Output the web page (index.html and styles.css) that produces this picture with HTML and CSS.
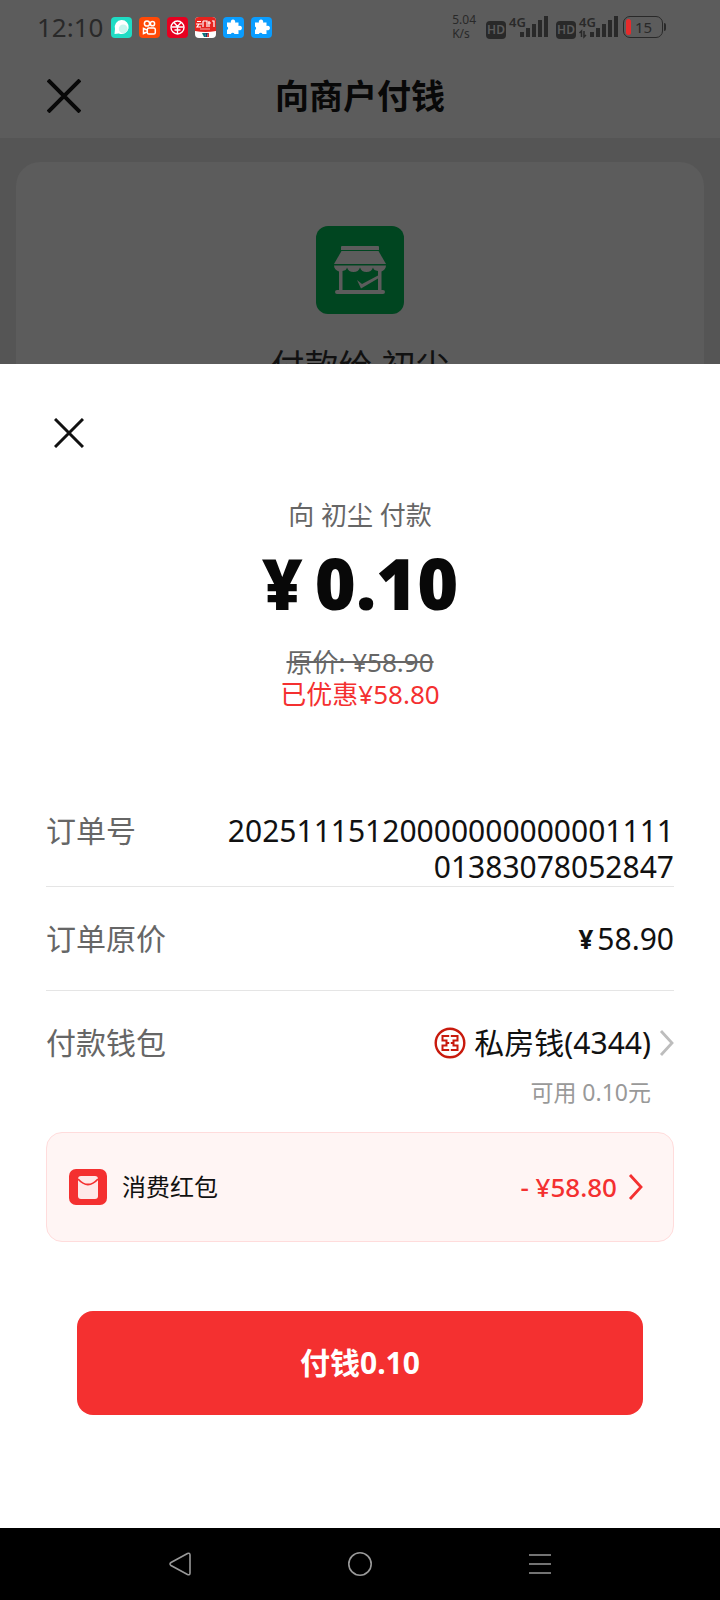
FILE: index.html
```html
<!DOCTYPE html>
<html lang="zh-CN">
<head>
<meta charset="utf-8">
<meta name="viewport" content="width=device-width, initial-scale=1">
<title>向商户付钱</title>
<link rel="stylesheet" href="styles.css">
</head>
<body>
<div class="backdrop">
  <div class="status">
    <span class="clock">12:10</span>
    <div class="apps">
      <svg class="app" viewBox="0 0 21 21"><rect width="21" height="21" rx="4" fill="#1fdcc4"/><path d="M3.500 17l.5-5a7 7 0 1 1 3.800 4.400z" fill="#fff"/><circle cx="12.200" cy="11.800" r="4.400" fill="#c9f5ee"/></svg>
      <svg class="app" viewBox="0 0 21 21"><rect width="21" height="21" rx="4" fill="#ff4906"/><g fill="none" stroke="#fff" stroke-width="1.500"><circle cx="8" cy="6.500" r="2.600"/><circle cx="13.500" cy="6.700" r="2.100"/><rect x="8.300" y="11" width="8" height="6" rx="1.600"/><path d="M8 13l-3.500-1.500v5L8 15"/></g></svg>
      <svg class="app" viewBox="0 0 21 21"><rect width="21" height="21" rx="4" fill="#e60020"/><g fill="none" stroke="#fff" stroke-width="1.400"><circle cx="10.500" cy="10.500" r="6.500"/><path d="M10.500 8v9M4.500 10h12M7 5.500l3.500 4 3.500-4M7.500 13h6"/></g></svg>
      <svg class="app" viewBox="0 0 21 21"><rect width="21" height="21" rx="4" fill="#fff"/><path d="M0 14V4a4 4 0 0 1 4-4h13a4 4 0 0 1 4 4v10q-10.500 2-21 0z" fill="#e5231e"/><path d="M2 4.500h4M1 7h6M4 7l-2 3h4M8 4v6M8 4h4v6M14 4v6M13 6h3M17 4h2v6" fill="none" stroke="#fff" stroke-width="1.200"/><path d="M5 12h10" stroke="#f5a7a4"/><path d="M7 16h3l1 4H9z" fill="#08777a"/><path d="M10 16h3l-1 4h-1z" fill="#173c66"/><path d="M13 16h1v4h-2z" fill="#d33"/></svg>
      <svg class="app" viewBox="0 0 21 21"><rect width="21" height="21" rx="4" fill="#0a9dff"/><path d="M4 5.500h4a2.200 2.200 0 1 1 4 0H15.500v3.500a2.300 2.300 0 1 1 0 4V17h-4a2 2 0 0 0-3.600 0H4v-4a2 2 0 0 0 0-3.600z" fill="#fff"/></svg>
      <svg class="app" viewBox="0 0 21 21"><rect width="21" height="21" rx="4" fill="#0a9dff"/><path d="M4 5.500h4a2.200 2.200 0 1 1 4 0H15.500v3.500a2.300 2.300 0 1 1 0 4V17h-4a2 2 0 0 0-3.600 0H4v-4a2 2 0 0 0 0-3.600z" fill="#fff"/></svg>
    </div>
    <div class="signals">
      <div class="speed"><span>5.04</span><span>K/s</span></div>
      <div class="sim">
        <span class="hd">HD</span>
        <div class="network">
          <span class="generation">4G</span>
          <svg class="bars" viewBox="0 0 40 24"><path d="M12 17h4v5h-4zM18 13h4v9h-4zM24 9h4v13h-4zM30 5h4v17h-4zM36 1h4v21h-4z" fill="#292929"/></svg>
        </div>
      </div>
      <div class="sim">
        <span class="hd">HD</span>
        <div class="network">
          <span class="generation">4G</span>
          <svg class="bars" viewBox="0 0 40 24"><path d="M12 17h4v5h-4zM18 13h4v9h-4zM24 9h4v13h-4zM30 5h4v17h-4zM36 1h4v21h-4z" fill="#292929"/><path d="M1.500 18l2-2v6M6 16v6l2-2" fill="none" stroke="#292929" stroke-width="1.500"/></svg>
        </div>
      </div>
      <div class="battery"><span class="charge"></span><span>15</span></div>
      <span class="battery-tip"></span>
    </div>
  </div>
  <header class="header">
    <button class="icon-button" type="button" aria-label="关闭页面">
      <svg class="close-page" viewBox="0 0 34 34"><path d="M1 1l32 32M33 1L1 33" stroke="#080808" stroke-width="4"/></svg>
    </button>
    <h1 class="title">向商户付钱</h1>
  </header>
  <div class="merchant">
    <svg class="shop" viewBox="0 0 88 88"><rect width="88" height="88" rx="12" fill="#004520"/><g fill="#5c5c5c"><path d="M26 20h36q1 0 1 1v3H25v-3q0-1 1-1z"/><path d="M25.500 25h37L70 38H18z"/><path d="M18 39.500h52c0 3-2 5-4.500 6V64H67q2 0 2 2t-2 2H21q-2 0-2-2t2-2h2V45.500c-3-1-5-3-5-6z"/></g><path d="M26.500 45q4-.5 4.500-3.500 1.500 4.500 6.500 4.500T44 41.500Q45.500 46 50.500 46T57 41.500q.5 3 5 3.500v19H26.500z" fill="#004520"/><path d="M41 54l5 4L62 49.500v3L45 62.500z" fill="#5c5c5c"/></svg>
    <p class="merchant-name">付款给 初尘</p>
  </div>
</div>

<main class="sheet">
  <button class="icon-button" type="button" aria-label="关闭">
    <svg class="close-sheet" viewBox="0 0 30 30"><path d="M1 1l28 28M29 1L1 29" stroke="#111" stroke-width="3"/></svg>
  </button>
  <section class="summary">
    <p class="payee">向 初尘 付款</p>
    <p class="amount"><span>¥</span><span>0.10</span></p>
    <p class="original"><s>原价: ¥58.90</s></p>
    <p class="discount">已优惠¥58.80</p>
  </section>
  <dl class="details">
    <div class="row row-order">
      <dt class="label">订单号</dt>
      <dd class="value order-number">2025111512000000000000111101383078052847</dd>
    </div>
    <div class="row">
      <dt class="label">订单原价</dt>
      <dd class="value price"><b class="yen">¥</b><span>58.90</span></dd>
    </div>
    <div class="row row-wallet">
      <dt class="label">付款钱包</dt>
      <dd class="value">
        <button class="wallet" type="button">
          <svg class="bank" viewBox="0 0 32 32"><circle cx="16" cy="16" r="14.300" fill="none" stroke="#c81a0d" stroke-width="2.400"/><path d="M15.200 9H8.500v4.500h4v5h-4V23h6.700M16.800 9h6.700v4.500h-4v5h4V23h-6.700M12.500 16h2.700M16.800 16h2.700" fill="none" stroke="#c81a0d" stroke-width="2"/></svg>
          <span>私房钱(4344)</span>
          <svg class="chevron" viewBox="0 0 15 28"><path d="M2 2l11 12L2 26" fill="none" stroke="#bdbdbd" stroke-width="2.800"/></svg>
        </button>
        <p class="available">可用 0.10元</p>
      </dd>
    </div>
  </dl>
  <button class="coupon" type="button">
    <svg class="packet" viewBox="0 0 38 36"><rect width="38" height="36" rx="7" fill="#f43030"/><rect x="9" y="7" width="20" height="23" rx="3" fill="#fee9e9"/><path d="M9 10q10 11 20 0" fill="none" stroke="#f43030" stroke-width="1.800"/></svg>
    <span class="coupon-name">消费红包</span>
    <span class="coupon-value">- ¥58.80</span>
    <svg class="chevron" viewBox="0 0 15 28"><path d="M2 2l11 12L2 26" fill="none" stroke="#f43030" stroke-width="2.800"/></svg>
  </button>
  <button class="pay" type="button">付钱0.10</button>
</main>

<nav class="system-nav">
  <button class="nav-button" type="button" aria-label="返回"><svg class="nav-icon" viewBox="0 0 26 26"><path d="M20.500 2.500Q23 1.500 23 4v18q0 2.500-2.500 1.500L4 14.500q-2-1.500 0-3z"/></svg></button>
  <button class="nav-button" type="button" aria-label="主页"><svg class="nav-icon" viewBox="0 0 26 26"><circle cx="13" cy="13" r="11.200"/></svg></button>
  <button class="nav-button" type="button" aria-label="最近任务"><svg class="nav-icon" viewBox="0 0 26 26"><path d="M2 4h22M2 13h22M2 22h22"/></svg></button>
</nav>
</body>
</html>
```

FILE: styles.css
```css
* {
  box-sizing: border-box;
}

body {
  display: flex;
  flex-direction: column;
  min-height: 100vh;
  margin: 0;
  background: #555;
  color: #111;
  font-family: "Noto Sans", "Noto Sans CJK SC", sans-serif;
  font-size: 30px;
  line-height: 36px;
}

h1, p, dl, dd {
  margin: 0;
}

button {
  padding: 0;
  border: 0;
  background: none;
  color: inherit;
  font: inherit;
  cursor: pointer;
}

svg {
  display: block;
  flex: none;
}

.backdrop {
  display: flex;
  flex-direction: column;
}

.status {
  display: flex;
  align-items: center;
  gap: 8px;
  height: 54px;
  padding: 0 54px 0 37px;
  background: #5c5c5c;
  color: #292929;
}

.clock {
  font-size: 26px;
}

.apps {
  display: flex;
  gap: 7px;
}

.app {
  width: 21px;
  height: 21px;
}

.signals {
  display: flex;
  align-items: center;
  margin-left: auto;
}

.speed {
  display: flex;
  flex-direction: column;
  margin-right: 10px;
  font-size: 12px;
  line-height: 14px;
}

.sim {
  display: flex;
  align-items: flex-end;
  gap: 2px;
  margin-right: 8px;
}

.sim + .sim {
  margin-right: 5px;
}

.hd {
  width: 20px;
  border-radius: 4px;
  background: #292929;
  color: #5c5c5c;
  font-size: 12px;
  font-weight: 600;
  line-height: 18px;
  text-align: center;
}

.network {
  position: relative;
}

.generation {
  position: absolute;
  top: 0;
  left: 1px;
  font-size: 13px;
  font-weight: 600;
  line-height: 14px;
}

.bars {
  width: 40px;
  height: 24px;
}

.battery {
  display: flex;
  align-items: center;
  gap: 4px;
  width: 40px;
  height: 22px;
  padding: 0 2px;
  border: 1px solid #292929;
  border-radius: 7px;
  font-size: 15px;
  line-height: 18px;
}

.charge {
  width: 5px;
  height: 16px;
  border-radius: 3px;
  background: #e62b2b;
}

.battery-tip {
  width: 2px;
  height: 8px;
  margin-left: 1px;
  border-radius: 0 2px 2px 0;
  background: #292929;
}

.header {
  display: grid;
  grid-template-columns: 42px 1fr 42px;
  align-items: center;
  height: 84px;
  padding: 0 43px;
  background: #5c5c5c;
  color: #080808;
}

.icon-button {
  display: flex;
  align-items: center;
  justify-content: center;
  width: 42px;
  height: 42px;
}

.close-page {
  width: 34px;
  height: 34px;
}

.close-sheet {
  width: 30px;
  height: 30px;
}

.title {
  font-size: 34px;
  font-weight: 700;
  text-align: center;
}

.merchant {
  display: flex;
  flex-direction: column;
  align-items: center;
  gap: 32px;
  margin: 24px 16px 0;
  padding-top: 64px;
  border-radius: 24px 24px 0 0;
  background: #5c5c5c;
}

.shop {
  width: 88px;
  height: 88px;
}

.merchant-name {
  font-size: 34px;
  line-height: 40px;
}

.sheet {
  position: relative;
  display: flex;
  flex: 1;
  flex-direction: column;
  margin-top: -22px;
  padding: 48px 46px 64px;
  background: #fff;
}

.sheet .icon-button {
  margin-left: 2px;
}

.summary {
  display: flex;
  flex-direction: column;
  align-items: center;
  margin-top: 45px;
  font-size: 26px;
  line-height: 32px;
}

.payee,
.original {
  color: #666;
}

.amount {
  display: flex;
  gap: 12px;
  margin: 16px 0 27px;
  color: #080808;
  font-family: "Open Sans", "Noto Sans", sans-serif;
  font-size: 70px;
  font-weight: 800;
  line-height: 72px;
}

.discount {
  color: #f43030;
}

.details {
  margin-top: 103px;
}

.row {
  display: flex;
  justify-content: space-between;
  padding: 34px 0 33px;
  border-bottom: 1px solid #e5e5e5;
}

.row-order {
  padding: 0 0 1px;
}

.row-wallet {
  padding-bottom: 24px;
  border-bottom: 0;
}

.label {
  color: #666;
}

.order-number {
  width: 72%;
  text-align: right;
  word-break: break-all;
}

.price {
  display: flex;
  align-items: center;
  gap: 4px;
}

.yen {
  font-size: 26px;
}

.wallet {
  display: flex;
  align-items: center;
  gap: 8px;
}

.bank {
  width: 32px;
  height: 32px;
}

.chevron {
  width: 15px;
  height: 28px;
}

.available {
  margin: 15px 23px 0 0;
  color: #999;
  font-size: 23px;
  line-height: 32px;
  text-align: right;
}

.coupon {
  display: flex;
  align-items: center;
  gap: 15px;
  height: 110px;
  padding: 0 30px 0 22px;
  border: 1px solid #ffdcdc;
  border-radius: 16px;
  background: #fff5f4;
}

.packet {
  width: 38px;
  height: 36px;
}

.coupon-name {
  font-size: 24px;
}

.coupon-value {
  margin-left: auto;
  color: #f43030;
  font-size: 26px;
  font-weight: 500;
}

.coupon .chevron {
  margin-left: -4px;
}

.pay {
  height: 104px;
  margin: 69px 31px 0;
  border-radius: 16px;
  background: #f43030;
  color: #fff;
  font-weight: 700;
}

.system-nav {
  display: flex;
  justify-content: center;
  gap: 20%;
  height: 72px;
  background: #000;
}

.nav-button {
  display: flex;
  align-items: center;
  justify-content: center;
  width: 36px;
}

.nav-icon {
  width: 26px;
  height: 26px;
  fill: none;
  stroke: #999;
  stroke-width: 1.6;
}
```
